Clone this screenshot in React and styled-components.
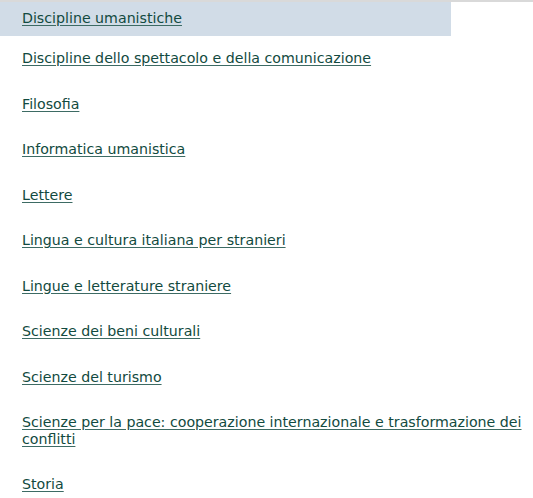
import React from "react";
import styled, { createGlobalStyle } from "styled-components";

const Global = createGlobalStyle`
  html, body { margin: 0; padding: 0; background: #fff; }
  body { font-family: "DejaVu Sans", Verdana, sans-serif; }
`;

const Page = styled.div`
  border-top: 2px solid #d9d9d9;
  width: 533px;
`;

const List = styled.ul`
  list-style: none;
  margin: 0;
  padding: 0;
  display: flex;
  flex-direction: column;
`;

const Item = styled.li`
  width: ${(p) => (p.$active ? "451px" : "auto")};
  box-sizing: border-box;
  padding: ${(p) => (p.$active ? "8px 2px 9.5px 22px" : "14px 2px 15px 22px")};
  font-size: 14.2px;
  line-height: 16.5px;
  background: ${(p) => (p.$active ? "#d1dce7" : "transparent")};
`;

const Link = styled.a`
  color: #124a40;
  text-decoration: underline;
  text-decoration-color: #3d6b64;
  text-underline-offset: 2px;
`;

const items = [
  "Discipline umanistiche",
  "Discipline dello spettacolo e della comunicazione",
  "Filosofia",
  "Informatica umanistica",
  "Lettere",
  "Lingua e cultura italiana per stranieri",
  "Lingue e letterature straniere",
  "Scienze dei beni culturali",
  "Scienze del turismo",
  "Scienze per la pace: cooperazione internazionale e trasformazione dei conflitti",
  "Storia",
];

export default function App() {
  return (
    <Page>
      <Global />
      <List>
        {items.map((t, i) => (
          <Item key={t} $active={i === 0}>
            <Link href="#">{t}</Link>
          </Item>
        ))}
      </List>
    </Page>
  );
}
